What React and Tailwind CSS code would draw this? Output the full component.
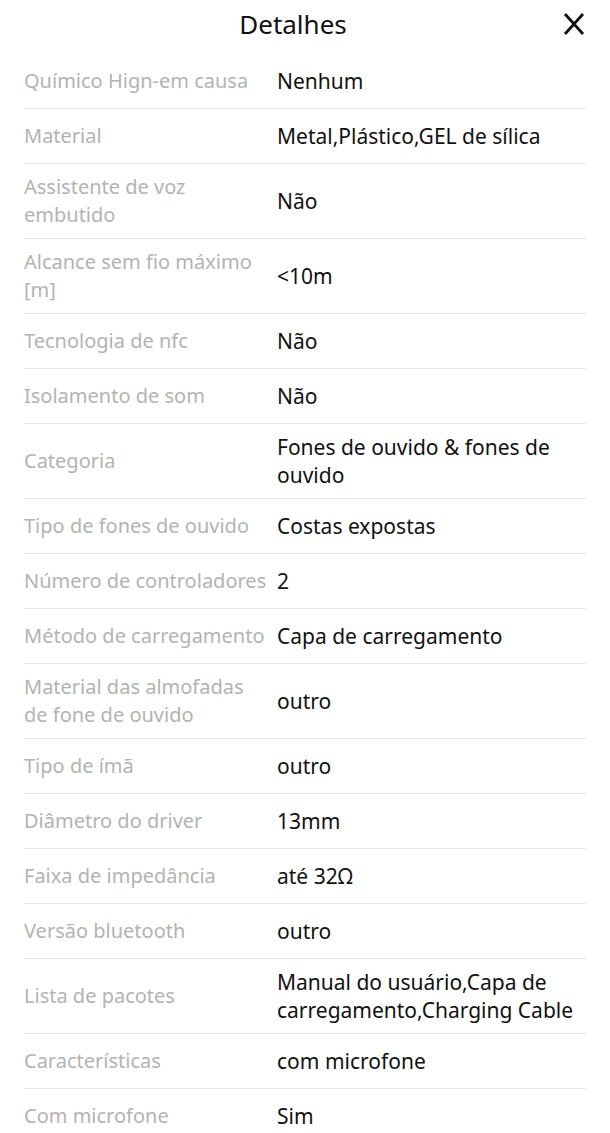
import React from "react";

const rows = [
  ["Químico Hign-em causa", "Nenhum"],
  ["Material", "Metal,Plástico,GEL de sílica"],
  ["Assistente de voz embutido", "Não"],
  ["Alcance sem fio máximo [m]", "<10m"],
  ["Tecnologia de nfc", "Não"],
  ["Isolamento de som", "Não"],
  ["Categoria", "Fones de ouvido & fones de ouvido"],
  ["Tipo de fones de ouvido", "Costas expostas"],
  ["Número de controladores", "2"],
  ["Método de carregamento", "Capa de carregamento"],
  ["Material das almofadas de fone de ouvido", "outro"],
  ["Tipo de ímã", "outro"],
  ["Diâmetro do driver", "13mm"],
  ["Faixa de impedância", "até 32Ω"],
  ["Versão bluetooth", "outro"],
  ["Lista de pacotes", "Manual do usuário,Capa de carregamento,Charging Cable"],
  ["Características", "com microfone"],
  ["Com microfone", "Sim"],
];

export default function App() {
  return (
    <div className="w-[610px] h-[1133px] overflow-hidden bg-white" style={{ fontFamily: "'Noto Sans', Roboto, sans-serif" }}>
      <div className="flex items-center h-[54px] pl-6 pr-[24px] pb-[6px]">
        <div className="flex-1 text-center text-[26px] text-[#111] leading-none">Detalhes</div>
        <svg width="24" height="24" viewBox="0 0 24 24" className="shrink-0">
          <path d="M3 2 L21 22 M21 2 L3 22" stroke="#111" strokeWidth="2.8" strokeLinecap="butt" fill="none" />
        </svg>
      </div>
      <div className="px-6">
        {rows.map(([k, v], i) => (
          <div key={i} className="flex items-center gap-2 min-h-[55px] py-[9px] border-b border-[#e6e6e6] leading-[28px]">
            <div className="w-[245px] shrink-0 text-[20px] text-[#b3b3b3]">{k}</div>
            <div className="flex-1 text-[21px] text-[#111]">{v}</div>
          </div>
        ))}
      </div>
    </div>
  );
}
